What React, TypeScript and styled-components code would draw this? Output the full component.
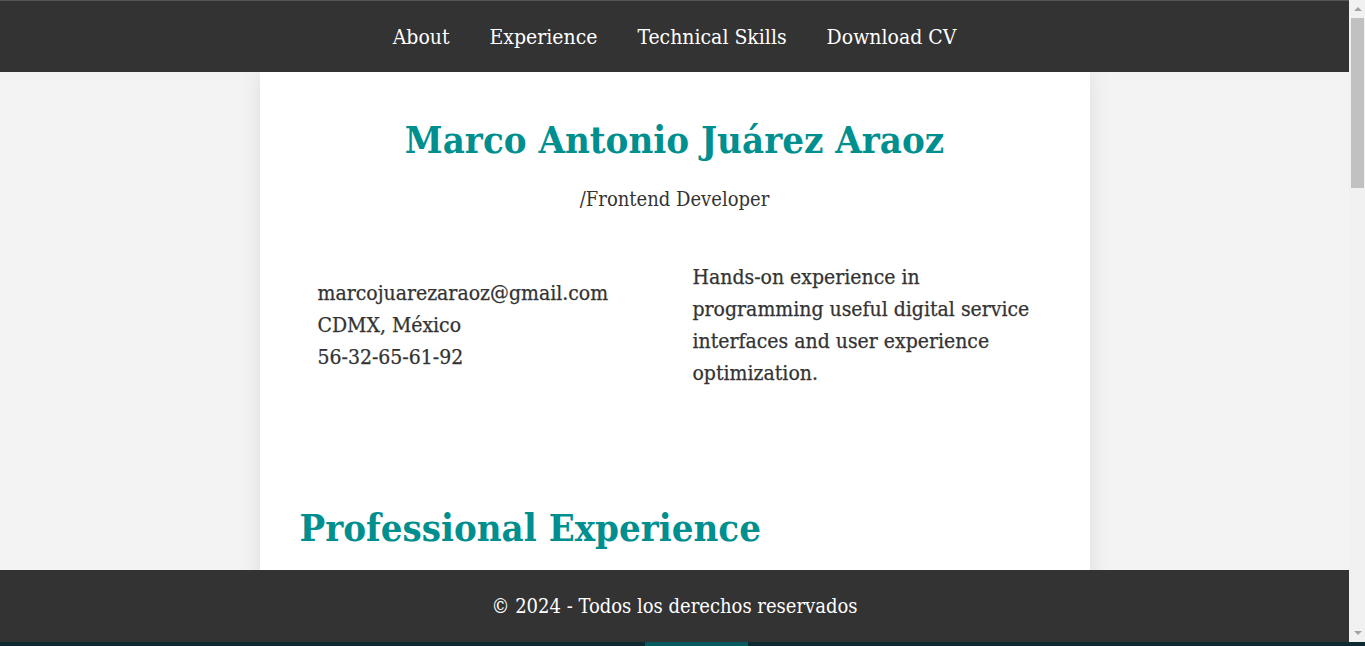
import React from "react";
import styled, { createGlobalStyle } from "styled-components";

const GlobalStyle = createGlobalStyle`
  * { box-sizing: border-box; }
  html, body { margin: 0; padding: 0; overflow: hidden; }
  body {
    background: #f3f3f3;
    font-family: "DejaVu Serif Condensed", "DejaVu Serif", serif;
    font-stretch: condensed;
    color: #333;
  }
`;

const Screen = styled.div`
  height: 100vh;
  display: flex;
  flex-direction: column;
  overflow: hidden;
`;

const Body = styled.div`
  flex: 1;
  min-height: 0;
  display: flex;
`;

const Page = styled.div`
  flex: 1;
  min-width: 0;
  display: flex;
  flex-direction: column;
`;

const Header = styled.header`
  flex: 0 0 72px;
  background: #333333;
  border-top: 1px solid #555;
  display: flex;
  align-items: center;
  justify-content: center;
`;

const Nav = styled.nav`
  display: flex;
  gap: 40px;
`;

const NavLink = styled.a`
  color: #fff;
  font-size: 21px;
  font-weight: 400;
  text-decoration: none;
`;

const Scroller = styled.main`
  flex: 1;
  min-height: 0;
  overflow: hidden;
  background: #f3f3f3;
`;

const Card = styled.div`
  width: 830px;
  margin: 0 auto;
  background: #fff;
  box-shadow: 0 0 22px rgba(0, 0, 0, 0.09);
  padding: 44px 40px 200px;
`;

const Name = styled.h1`
  margin: 0;
  text-align: center;
  color: #008f8f;
  font-size: 38px;
  line-height: 48px;
  font-weight: 700;
`;

const Role = styled.p`
  margin: 23px 0 0;
  text-align: center;
  font-size: 20px;
  line-height: 24px;
  font-weight: 400;
  color: #333;
`;

const Info = styled.div`
  margin-top: 50px;
  display: grid;
  grid-template-columns: 1fr 1fr;
  align-items: center;
`;

const Column = styled.div`
  padding: 0 10px 0 18px;
  font-size: 21px;
  line-height: 32px;
  font-weight: 400;
  color: #333;
  -webkit-text-stroke: 0.25px #333;
`;

const Line = styled.div``;

const Summary = styled.p`
  margin: 0;
`;

const SectionTitle = styled.h2`
  margin: 115px 0 0;
  color: #008f8f;
  font-size: 38px;
  line-height: 48px;
  font-weight: 700;
`;

const Job = styled.article`
  margin-top: 40px;
`;

const JobTitle = styled.h3`
  margin: 0;
  font-size: 24px;
  font-weight: 700;
  color: #333;
`;

const JobMeta = styled.p`
  margin: 8px 0 0;
  font-size: 18px;
  color: #666;
`;

const JobText = styled.p`
  margin: 12px 0 0;
  font-size: 18px;
  line-height: 30px;
`;

const Footer = styled.footer`
  flex: 0 0 72px;
  background: #333333;
  color: #fff;
  display: flex;
  align-items: center;
  justify-content: center;
  font-size: 20px;
`;

const ScrollTrack = styled.div`
  flex: 0 0 16px;
  background: #f1f1f1;
  display: flex;
  flex-direction: column;
  align-items: center;
  padding: 0 1px 0 2px;
`;

const ArrowButton = styled.div<{ $down?: boolean }>`
  flex: 0 0 17px;
  display: flex;
  align-items: center;
  justify-content: center;
  svg { transform: ${(p) => (p.$down ? "rotate(180deg)" : "none")}; }
`;

const Thumb = styled.div`
  flex: 0 0 170px;
  align-self: stretch;
  background: #c1c1c1;
  margin-top: 1px;
`;

const TrackFill = styled.div`
  flex: 1;
`;

const Strip = styled.div`
  flex: 0 0 4px;
  background: #0d2a33;
  display: flex;
`;

const StripActive = styled.span`
  margin-left: 645px;
  width: 103px;
  background: #075a5f;
`;

const Arrow = () => (
  <svg width="8" height="5" viewBox="0 0 8 5">
    <polygon points="0,5 4,1 8,5" fill="#a3a3a3" />
  </svg>
);

const jobs = [
  {
    title: "Frontend Developer",
    meta: "Empresa de Tecnología · 2022 - 2024",
    text: "Development of responsive web interfaces with React, TypeScript and modern CSS, improving performance and accessibility.",
  },
  {
    title: "Web Developer",
    meta: "Agencia Digital · 2020 - 2022",
    text: "Implementation of landing pages and dashboards, collaborating with design teams to optimize user experience.",
  },
  {
    title: "Junior Developer",
    meta: "Startup · 2019 - 2020",
    text: "Maintenance of web applications, bug fixing and integration of REST services.",
  },
];

const extras = [
  { title: "Education", text: "Ingeniería en Sistemas Computacionales" },
  { title: "Languages", text: "Español (nativo), English (intermediate)" },
  { title: "Projects", text: "Portfolio, landing pages, dashboards and e-commerce interfaces." },
  { title: "Certifications", text: "Responsive Web Design, JavaScript Algorithms and Data Structures." },
];

export default function App() {
  return (
    <>
      <GlobalStyle />
      <Screen>
        <Body>
          <Page>
            <Header>
              <Nav>
                <NavLink href="#about">About</NavLink>
                <NavLink href="#experience">Experience</NavLink>
                <NavLink href="#skills">Technical Skills</NavLink>
                <NavLink href="#cv">Download CV</NavLink>
              </Nav>
            </Header>
            <Scroller>
              <Card>
                <Name>Marco Antonio Juárez Araoz</Name>
                <Role>/Frontend Developer</Role>
                <Info id="about">
                  <Column>
                    <Line>marcojuarezaraoz@gmail.com</Line>
                    <Line>CDMX, México</Line>
                    <Line>56-32-65-61-92</Line>
                  </Column>
                  <Column>
                    <Summary>
                      Hands-on experience in programming useful digital service
                      interfaces and user experience optimization.
                    </Summary>
                  </Column>
                </Info>
                <SectionTitle id="experience">Professional Experience</SectionTitle>
                {jobs.map((j) => (
                  <Job key={j.title}>
                    <JobTitle>{j.title}</JobTitle>
                    <JobMeta>{j.meta}</JobMeta>
                    <JobText>{j.text}</JobText>
                  </Job>
                ))}
                <SectionTitle id="skills">Technical Skills</SectionTitle>
                <JobText>HTML, CSS, JavaScript, TypeScript, React, Git, Figma</JobText>
                {extras.map((e) => (
                  <Job key={e.title}>
                    <JobTitle>{e.title}</JobTitle>
                    <JobText>{e.text}</JobText>
                  </Job>
                ))}
              </Card>
            </Scroller>
            <Footer>© 2024 - Todos los derechos reservados</Footer>
          </Page>
          <ScrollTrack>
            <ArrowButton>
              <Arrow />
            </ArrowButton>
            <Thumb />
            <TrackFill />
            <ArrowButton $down>
              <Arrow />
            </ArrowButton>
          </ScrollTrack>
        </Body>
        <Strip>
          <StripActive />
        </Strip>
      </Screen>
    </>
  );
}
